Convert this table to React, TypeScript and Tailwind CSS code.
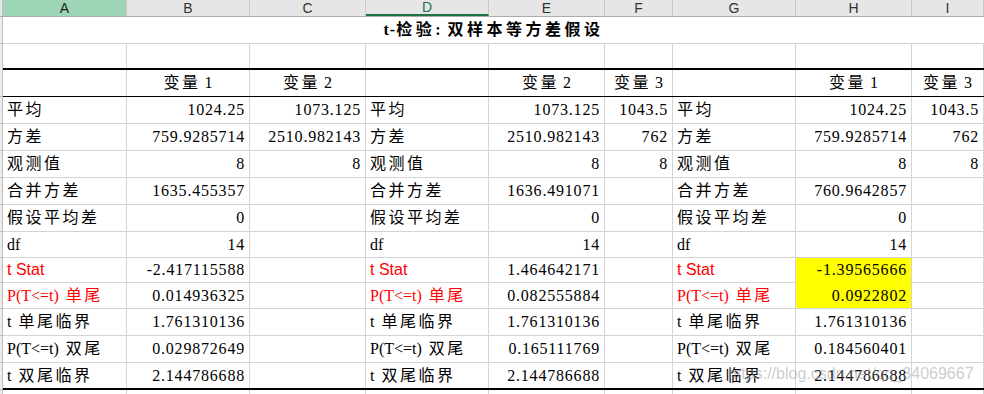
import React from 'react';

const serif = "font-['Liberation_Serif','Noto_Sans_CJK_SC',serif]";
const sans = "font-['Liberation_Sans','Noto_Sans_CJK_SC',sans-serif]";

const widths = [
  'w-[124px]',
  'w-[123px]',
  'w-[116px]',
  'w-[123px]',
  'w-[116px]',
  'w-[68px]',
  'w-[123px]',
  'w-[116px]',
  'w-[72px]',
];
const letters = ['A', 'B', 'C', 'D', 'E', 'F', 'G', 'H', 'I'];

// 中文字符间距大一些，像 Excel 里的宋体
const Txt = ({s}: {s: string}) => {
  const parts = s.split(/([\u4e00-\u9fff]+)/).filter(Boolean);
  return (
    <span className="whitespace-pre">
      {parts.map((p, i) =>
        /[\u4e00-\u9fff]/.test(p) ? (
          <span
            key={i}
            className={`tracking-[2.5px] ${
              i > 0 && parts[i - 1].endsWith(' ') ? 'ml-[3px]' : ''
            }`}
          >
            {p}
          </span>
        ) : (
          <span key={i}>{p}</span>
        ),
      )}
    </span>
  );
};

interface Row {
  h: string;
  label: string;
  red?: boolean;
  sansLabel?: boolean;
  yellow?: 'top' | 'bottom';
  v: string[];
}

const rows: Row[] = [
  {h: 'h-[27px]', label: '平均', v: ['1024.25', '1073.125', '1073.125', '1043.5', '1024.25', '1043.5']},
  {h: 'h-[27px]', label: '方差', v: ['759.9285714', '2510.982143', '2510.982143', '762', '759.9285714', '762']},
  {h: 'h-[27px]', label: '观测值', v: ['8', '8', '8', '8', '8', '8']},
  {h: 'h-[27px]', label: '合并方差', v: ['1635.455357', '', '1636.491071', '', '760.9642857', '']},
  {h: 'h-[27px]', label: '假设平均差', v: ['0', '', '0', '', '0', '']},
  {h: 'h-[26px]', label: 'df', v: ['14', '', '14', '', '14', '']},
  {h: 'h-[25px]', label: 't Stat', red: true, sansLabel: true, yellow: 'top', v: ['-2.417115588', '', '1.464642171', '', '-1.39565666', '']},
  {h: 'h-[26px]', label: 'P(T<=t) 单尾', red: true, yellow: 'bottom', v: ['0.014936325', '', '0.082555884', '', '0.0922802', '']},
  {h: 'h-[27px]', label: 't 单尾临界', v: ['1.761310136', '', '1.761310136', '', '1.761310136', '']},
  {h: 'h-[27px]', label: 'P(T<=t) 双尾', v: ['0.029872649', '', '0.165111769', '', '0.184560401', '']},
  {h: 'h-[27px]', label: 't 双尾临界', v: ['2.144786688', '', '2.144786688', '', '2.144786688', '']},
];

const Stub = ({line = true}: {line?: boolean}) => (
  <div
    className={`w-[3px] shrink-0 bg-[#ececec] border-r border-[#bcbcbc] ${
      line ? 'border-b' : ''
    }`}
  />
);

const Header = () => (
  <div className={`flex h-[17px] bg-[#e6e6e6] border-b border-[#ababab] ${sans}`}>
    <div className="w-[3px] shrink-0 bg-[#e6e6e6] border-r border-[#bcbcbc]" />
    {letters.map((l, i) => (
      <div
        key={l}
        className={`${widths[i]} shrink-0 flex items-center justify-center text-[14px] leading-none border-r border-[#c8c8c8] ${
          i === 0
            ? 'bg-[#9fd5b7] text-[#222]'
            : i === 3
              ? 'text-[#217346] border-b-2 border-b-[#217346]'
              : 'text-[#333]'
        }`}
      >
        {l}
      </div>
    ))}
  </div>
);

const DataRow = ({row, last}: {row: Row; last: boolean}) => {
  const cells = [
    row.label,
    row.v[0],
    row.v[1],
    row.label,
    row.v[2],
    row.v[3],
    row.label,
    row.v[4],
    row.v[5],
  ];
  return (
    <div className={`flex ${row.h}`}>
      <Stub />
      <div className={`flex ${last ? 'border-b-2 border-black' : ''}`}>
        {cells.map((c, i) => {
          const isLabel = i % 3 === 0;
          const yellow = i === 7 && row.yellow;
          return (
            <div
              key={i}
              className={`${widths[i]} shrink-0 flex items-center px-[4px] text-[16px] leading-none whitespace-nowrap overflow-hidden border-r border-[#d4d4d4] ${
                last ? '' : 'border-b'
              } ${yellow ? 'bg-[#ffff00]' : ''} ${
                yellow === 'top' ? 'border-b-[#ffff00]' : ''
              } ${
                isLabel
                  ? `justify-start ${row.sansLabel ? sans : serif} ${
                      row.red ? 'text-[#ff0000]' : 'text-black'
                    }`
                  : `justify-end tracking-[0.8px] text-black ${serif}`
              }`}
            >
              {isLabel ? <Txt s={c} /> : c}
            </div>
          );
        })}
      </div>
    </div>
  );
};

export default function App() {
  const heads = ['', '变量 1', '变量 2', '', '变量 2', '变量 3', '', '变量 1', '变量 3'];

  return (
    <div className="relative w-[984px] h-[394px] overflow-hidden bg-white">
      <Header />

      {/* 合并的标题行 */}
      <div className="flex h-[27px]">
        <Stub />
        <div
          className={`flex-1 flex items-center justify-center border-b border-[#d4d4d4] text-[16px] font-bold leading-none text-black ${serif}`}
        >
          <span className="whitespace-pre [word-spacing:3px]">
            <span className="tracking-[1px]">t-</span>
            <span className="tracking-[3.5px]">检验</span>
            <span>: </span>
            <span className="tracking-[3.5px]">双样本等方差假设</span>
          </span>
        </div>
      </div>

      {/* 空行 */}
      <div className="flex h-[24px]">
        <Stub line={false} />
        {widths.map((w, i) => (
          <div key={i} className={`${w} shrink-0 border-r border-[#d4d4d4]`} />
        ))}
      </div>

      {/* 变量 表头 */}
      <div className="flex h-[29px]">
        <Stub />
        <div className="flex border-t-2 border-b border-black">
          {heads.map((h, i) => (
            <div
              key={i}
              className={`${widths[i]} shrink-0 flex items-center justify-center text-[16px] leading-none text-black border-r border-r-[#d4d4d4] ${serif}`}
            >
              {h && <Txt s={h} />}
            </div>
          ))}
        </div>
      </div>

      {rows.map((r, i) => (
        <DataRow key={i} row={r} last={i === rows.length - 1} />
      ))}

      {/* 下面的空白行 */}
      <div className="flex h-[20px]">
        <Stub line={false} />
        {widths.map((w, i) => (
          <div key={i} className={`${w} shrink-0 border-r border-[#d4d4d4]`} />
        ))}
      </div>

      {/* 水印 */}
      <div
        className={`absolute left-[728px] top-[366px] text-[16px] leading-none text-[#9a9a9a]/50 pointer-events-none whitespace-nowrap ${sans}`}
      >
        https://blog.csdn.net/qq_34069667
      </div>
    </div>
  );
}
